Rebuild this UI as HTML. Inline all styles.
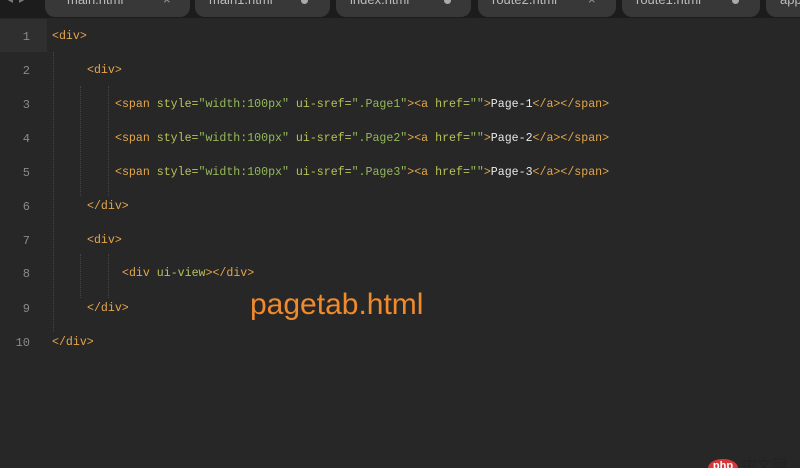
<!DOCTYPE html>
<html><head><style>
html,body{margin:0;width:800px;height:468px;overflow:hidden}
body{background:#272727;position:relative;font-family:"Liberation Mono",monospace}
.tabbar{position:absolute;left:0;top:0;width:800px;height:18px;background:#1c1c1c}
.tab{position:absolute;top:0;height:17px;background:#383838;border-radius:0 0 10px 10px;color:#bbb;font:13px "Liberation Sans",sans-serif;line-height:4px;overflow:hidden}
.tab span{position:absolute;top:-2px}
.tab i{position:absolute;top:-3px;width:7px;height:7px;border-radius:50%;background:#aaa}
.hl{position:absolute;left:0;top:19px;width:47px;height:33px;background:#2f2f2f}
.ln{position:absolute;left:0;width:30px;text-align:right;color:#8a8a8a;font-size:12px}
.code{position:absolute;font-size:11.6px;white-space:pre;color:#e8e8e8}
.t{color:#e4a64c}.a{color:#b8c25a}.s{color:#94b85c}
.g{position:absolute;width:0;border-left:1px dotted #444}
</style></head><body>
<div class="tabbar">
<div class="tab" style="left:45px;width:145px"><span style="left:22px">main.html</span><span style="left:118px;color:#999">×</span></div>
<div class="tab" style="left:195px;width:135px"><span style="left:14px">main1.html</span><i style="left:106px"></i></div>
<div class="tab" style="left:336px;width:135px"><span style="left:14px">index.html</span><i style="left:108px"></i></div>
<div class="tab" style="left:478px;width:138px"><span style="left:14px">route2.html</span><span style="left:110px;color:#999">×</span></div>
<div class="tab" style="left:622px;width:138px"><span style="left:14px">route1.html</span><i style="left:110px"></i></div>
<div class="tab" style="left:766px;width:60px"><span style="left:14px">app</span></div>
<div style="position:absolute;left:8px;top:0;color:#777;font-size:10px;line-height:4px">◂ ▸</div>
</div>
<div class="hl"></div>
<div class="g" style="left:53px;top:52px;height:280px"></div>
<div class="g" style="left:80px;top:86px;height:110px"></div>
<div class="g" style="left:108px;top:86px;height:110px"></div>
<div class="g" style="left:80px;top:254px;height:44px"></div>
<div class="g" style="left:108px;top:254px;height:44px"></div>

<div class="ln" style="top:30px">1</div>
<div class="ln" style="top:64px">2</div>
<div class="ln" style="top:98px">3</div>
<div class="ln" style="top:132px">4</div>
<div class="ln" style="top:166px">5</div>
<div class="ln" style="top:200px">6</div>
<div class="ln" style="top:234px">7</div>
<div class="ln" style="top:267px">8</div>
<div class="ln" style="top:302px">9</div>
<div class="ln" style="top:336px">10</div>

<div class="code" style="left:52px;top:30px"><span class="t">&lt;div&gt;</span></div>
<div class="code" style="left:87px;top:64px"><span class="t">&lt;div&gt;</span></div>
<div class="code" style="left:115px;top:98px"><span class="t">&lt;span </span><span class="a">style=</span><span class="s">"width:100px"</span> <span class="a">ui-sref=</span><span class="s">".Page1"</span><span class="t">&gt;&lt;a </span><span class="a">href=</span><span class="s">""</span><span class="t">&gt;</span>Page-1<span class="t">&lt;/a&gt;&lt;/span&gt;</span></div>
<div class="code" style="left:115px;top:132px"><span class="t">&lt;span </span><span class="a">style=</span><span class="s">"width:100px"</span> <span class="a">ui-sref=</span><span class="s">".Page2"</span><span class="t">&gt;&lt;a </span><span class="a">href=</span><span class="s">""</span><span class="t">&gt;</span>Page-2<span class="t">&lt;/a&gt;&lt;/span&gt;</span></div>
<div class="code" style="left:115px;top:166px"><span class="t">&lt;span </span><span class="a">style=</span><span class="s">"width:100px"</span> <span class="a">ui-sref=</span><span class="s">".Page3"</span><span class="t">&gt;&lt;a </span><span class="a">href=</span><span class="s">""</span><span class="t">&gt;</span>Page-3<span class="t">&lt;/a&gt;&lt;/span&gt;</span></div>
<div class="code" style="left:87px;top:200px"><span class="t">&lt;/div&gt;</span></div>
<div class="code" style="left:87px;top:234px"><span class="t">&lt;div&gt;</span></div>
<div class="code" style="left:122px;top:267px"><span class="t">&lt;div </span><span class="a">ui-view</span><span class="t">&gt;&lt;/div&gt;</span></div>
<div class="code" style="left:87px;top:302px"><span class="t">&lt;/div&gt;</span></div>
<div class="code" style="left:52px;top:336px"><span class="t">&lt;/div&gt;</span></div>

<div style="position:absolute;left:250px;top:288px;color:#f08a2c;font:30px 'Liberation Sans',sans-serif">pagetab.html</div>

<div style="position:absolute;left:708px;top:459px;width:30px;height:18px;border-radius:50%;background:#d9383a;color:#fff;font:bold 11px 'Liberation Sans',sans-serif;text-align:center;line-height:14px">php</div>
<div style="position:absolute;left:742px;top:457px;color:#222;font:15px 'Noto Sans CJK SC',sans-serif;line-height:16px">中文网</div>
</body></html>
